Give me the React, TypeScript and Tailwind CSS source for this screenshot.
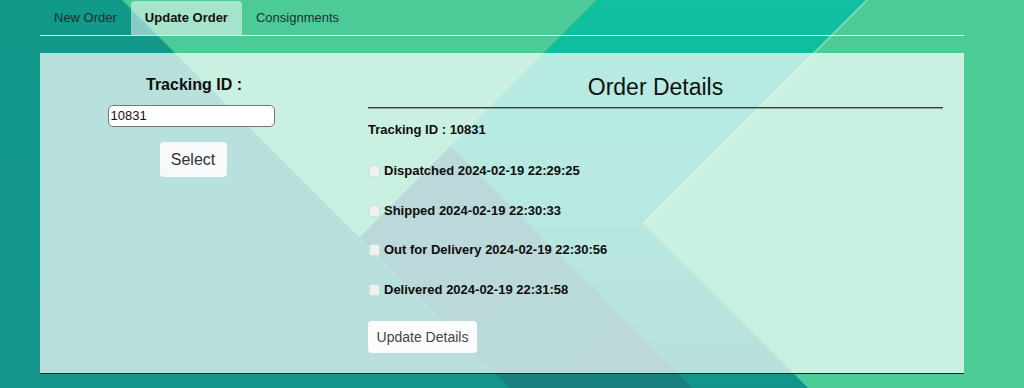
import React from "react";

function Background() {
  return (
    <svg
      className="absolute inset-0 w-full h-full"
      viewBox="0 0 1024 388"
      preserveAspectRatio="none"
      aria-hidden="true"
    >
      <defs>
        <linearGradient id="tealD" x1="0" y1="0" x2="0" y2="1">
          <stop offset="0" stopColor="#0fc1a0" />
          <stop offset="0.55" stopColor="#11b39c" />
          <stop offset="1" stopColor="#12948a" />
        </linearGradient>
        <linearGradient id="baseA" x1="0" y1="0" x2="0" y2="1">
          <stop offset="0" stopColor="#11998a" />
          <stop offset="1" stopColor="#13958a" />
        </linearGradient>
        <linearGradient id="grayC" x1="0" y1="0" x2="1" y2="1">
          <stop offset="0" stopColor="#1f7f86" />
          <stop offset="1" stopColor="#177f7c" />
        </linearGradient>
      </defs>
      <rect x="0" y="0" width="1024" height="388" fill="url(#baseA)" />
      <polygon points="122,0 597,0 359.5,237.5" fill="#4ccb98" />
      <polygon points="359.5,237.5 451,146 693,388 510,388" fill="url(#grayC)" />
      <polygon points="597,0 867,0 643.5,223.5 808,388 693,388 451,146" fill="url(#tealD)" />
      <polygon points="867,0 1024,0 1024,388 808,388 643.5,223.5" fill="#4ccb97" />
      <line x1="867" y1="0" x2="643.5" y2="223.5" stroke="#ffffff" strokeOpacity="0.35" strokeWidth="2" />
    </svg>
  );
}

function StatusRow({ label, mt }: { label: string; mt: string }) {
  return (
    <div className={`flex items-center h-[16px] ${mt}`}>
      <span className="ml-[1px] w-[11px] h-[12px] rounded-[2px] border border-[#d3dcd9] bg-[#eef3f1]" />
      <span className="ml-[4px] text-[13px] leading-[16px] font-bold text-[#0d0d0d]">{label}</span>
    </div>
  );
}

export default function App() {
  return (
    <div className="relative w-full h-[388px] overflow-hidden font-['Liberation_Sans',Arial,sans-serif]">
      <Background />
      <div className="relative ml-[40px] w-[924px] pt-[1px]">
        <ul className="flex h-[35px] border-b border-white/80">
          <li className="h-[34px] px-[14px] flex items-center text-[13px] text-[#1a332e]">New Order</li>
          <li className="h-[34px] px-[14px] flex items-center text-[13px] font-bold text-[#111] bg-white/50 rounded-t-[4px]">
            Update Order
          </li>
          <li className="h-[34px] px-[14px] flex items-center text-[13px] text-[#1a332e]">Consignments</li>
        </ul>
        <div className="mt-[17px] h-[321px] bg-white/70 border-b border-[#1f2b29] flex">
          <div className="w-[308px] flex flex-col items-center pt-[23px]">
            <div className="text-[16px] leading-[18px] font-bold text-[#0d0d0d]">Tracking ID :</div>
            <div className="mt-[11px] mr-[6px] w-[167px] h-[22px] rounded-[5px] border border-[#767676] bg-white flex items-center px-[2px] text-[13px] text-[#111]">
              10831
            </div>
            <button className="mt-[15px] mr-[2px] w-[67px] h-[35px] rounded-[4px] bg-[#f8f9fa] text-[16px] text-[#333]">
              Select
            </button>
          </div>
          <div className="ml-[20px] flex-1 mr-[21px] pt-[21px]">
            <div className="text-center text-[23px] leading-[26px] text-[#111]">Order Details</div>
            <div className="mt-[7px] h-[1px] bg-[#363b3a] shadow-[0_1px_0_rgba(60,70,68,0.4)]" />
            <div className="mt-[14px] text-[13px] leading-[16px] font-bold text-[#0d0d0d]">Tracking ID : 10831</div>
            <StatusRow label="Dispatched 2024-02-19 22:29:25" mt="mt-[25px]" />
            <StatusRow label="Shipped 2024-02-19 22:30:33" mt="mt-[24px]" />
            <StatusRow label="Out for Delivery 2024-02-19 22:30:56" mt="mt-[23px]" />
            <StatusRow label="Delivered 2024-02-19 22:31:58" mt="mt-[24px]" />
            <button className="mt-[23px] w-[109px] h-[32px] rounded-[4px] bg-[#fbfcfc] text-[14px] text-[#444]">
              Update Details
            </button>
          </div>
        </div>
      </div>
    </div>
  );
}
